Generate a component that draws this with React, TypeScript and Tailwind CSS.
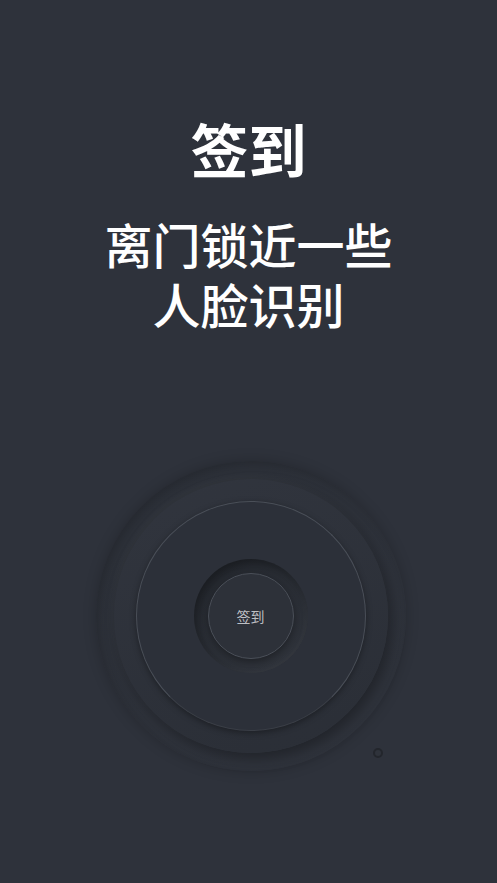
import React from 'react';

const font = { fontFamily: '"Noto Sans CJK SC", "Noto Sans", sans-serif' };

// Concentric neumorphic rings of the check-in button
const CheckInDial = () => {
  return (
    <div className="relative w-[310px] h-[310px]">
      <div className="w-full h-full rounded-full flex items-center justify-center bg-[linear-gradient(150deg,#2b2f37,#30343d)] shadow-[0_0_14px_rgba(0,0,0,0.2),inset_3px_3px_8px_rgba(0,0,0,0.14)]">
        <div className="w-[274px] h-[274px] rounded-full flex items-center justify-center bg-[linear-gradient(160deg,#31353e,#2a2e36)] shadow-[4px_6px_14px_rgba(0,0,0,0.3),-2px_-3px_8px_rgba(255,255,255,0.03)]">
          <div className="w-[230px] h-[230px] rounded-full flex items-center justify-center bg-[#2c3039] border border-[#4a4f58] border-b-[#3a3e46] shadow-[0_2px_6px_rgba(0,0,0,0.35)]">
            <div className="w-[114px] h-[114px] rounded-full flex items-center justify-center bg-[linear-gradient(160deg,#262a31,#30343c)] shadow-[inset_4px_5px_10px_rgba(0,0,0,0.35),inset_-2px_-2px_6px_rgba(255,255,255,0.03)]">
              <div className="w-[86px] h-[86px] rounded-full flex items-center justify-center bg-[#2d3139] border border-[#4a4f58] shadow-[0_3px_8px_rgba(0,0,0,0.35)]">
                <span className="text-[14px] text-[#bdbfc3]" style={font}>
                  签到
                </span>
              </div>
            </div>
          </div>
        </div>
      </div>
      <div className="absolute left-[277px] top-[287px] w-[10px] h-[10px] rounded-full border-2 border-[#23262c] bg-[#2f333b]" />
    </div>
  );
};

export default function App() {
  return (
    <div className="w-[497px] h-[883px] bg-[#2e323b] flex flex-col items-center overflow-hidden" style={font}>
      <h1 className="mt-[108px] text-[58px] leading-[80px] font-bold text-white">签到</h1>
      <div className="mt-[25px] flex flex-col items-center text-[48px] leading-[60px] font-medium text-white">
        <span>离门锁近一些</span>
        <span>人脸识别</span>
      </div>
      <div className="mt-[128px] ml-[4px]">
        <CheckInDial />
      </div>
    </div>
  );
}
